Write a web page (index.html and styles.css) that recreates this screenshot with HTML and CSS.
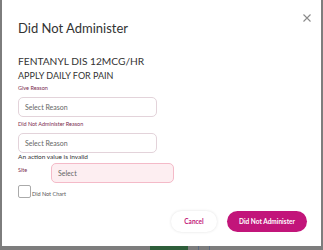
FILE: index.html
```html
<!DOCTYPE html>
<html>
<head>
    <meta charset="UTF-8">
    <meta name="viewport" content="width=device-width, initial-scale=1.0">
    <title>Did Not Administer</title>
    <link rel="stylesheet" href="styles.css">
</head>
<body>
    <div class="overlay">
        <div class="modal">
            <button class="close" aria-label="Close">
                <svg width="8" height="8" viewBox="0 0 8 8"><path d="M0.5 0.5L7.5 7.5M7.5 0.5L0.5 7.5" stroke="#8a8a8a" stroke-width="1.1" fill="none"/></svg>
            </button>
            <h1>Did Not Administer</h1>

            <div class="drug">FENTANYL DIS 12MCG/HR</div>
            <div class="sig">APPLY DAILY FOR PAIN</div>

            <label class="field-label">Give Reason</label>
            <div class="select-box">Select Reason</div>

            <label class="field-label">Did Not Administer Reason</label>
            <div class="select-box">Select Reason</div>

            <div class="error">An action value is invalid</div>
            <div class="site-row">
                <label class="field-label site-label">Site</label>
                <div class="select-box invalid">Select</div>
            </div>

            <div class="chart-row">
                <span class="checkbox"></span>
                <span class="chart-label">Did Not Chart</span>
            </div>

            <div class="actions">
                <button class="btn btn-cancel">Cancel</button>
                <button class="btn btn-primary">Did Not Administer</button>
            </div>
        </div>
        <div class="bottom-strip">
            <span class="strip-green"></span>
            <span class="strip-mark"></span>
            <span class="strip-mark"></span>
        </div>
    </div>
</body>
</html>
```

FILE: styles.css
```css
* {
    box-sizing: border-box;
}
body {
    margin: 0;
    font-family: Lato, 'Open Sans', sans-serif;
    background: #7d7d7d;
    color: #333;
}
.overlay {
    width: 323px;
    height: 250px;
    padding: 0 2px;
    overflow: hidden;
}
.modal {
    position: relative;
    background: #fff;
    height: 246px;
    padding: 21px 14px 0 16px;
}
.close {
    position: absolute;
    top: 10px;
    right: 10px;
    border: none;
    background: none;
    padding: 0;
    cursor: pointer;
}
h1 {
    margin: 0 0 20px;
    font-size: 13px;
    font-weight: 400;
    color: #333;
    line-height: 14px;
}
.drug {
    font-size: 10.2px;
    line-height: 12px;
    color: #333;
}
.sig {
    margin-top: 4px;
    font-size: 9px;
    line-height: 10px;
    color: #333;
}
.field-label {
    display: block;
    margin-top: 4px;
    font-size: 5.5px;
    line-height: 7px;
    color: #7b2d4f;
}
.select-box {
    margin-top: 5px;
    width: 139px;
    height: 20px;
    padding: 0 6px;
    border: 1px solid #e3d3da;
    border-radius: 5px;
    font-size: 7px;
    line-height: 18px;
    color: #666;
    background: #fff;
}
.error {
    margin-top: 0;
    font-size: 6.5px;
    line-height: 8px;
    color: #333;
}
.site-row {
    display: flex;
}
.site-label {
    width: 33px;
    margin-top: 6px;
}
.select-box.invalid {
    margin-top: 2px;
    width: 123px;
    background: #fdeef1;
    border-color: #f4bac8;
}
.chart-row {
    display: flex;
    align-items: flex-end;
    margin-top: 2px;
}
.checkbox {
    width: 13px;
    height: 13px;
    border: 1px solid #aaa;
    border-radius: 2px;
}
.chart-label {
    font-size: 5.5px;
    line-height: 7px;
    color: #555;
    margin-left: 1px;
}
.actions {
    display: flex;
    justify-content: flex-end;
    gap: 10px;
    margin-top: 13px;
}
.btn {
    height: 21px;
    border: none;
    border-radius: 11px;
    font-family: Lato, 'Open Sans', sans-serif;
    font-size: 6.5px;
    font-weight: 700;
    cursor: pointer;
}
.btn-cancel {
    width: 46px;
    background: #fff;
    color: #c2187a;
    box-shadow: 0 0 3px rgba(0,0,0,0.12);
}
.btn-primary {
    width: 80px;
    background: #c2157a;
    color: #fff;
}
.bottom-strip {
    display: flex;
    height: 4px;
    gap: 10px;
    padding-left: 148px;
}
.strip-green {
    width: 38px;
    background: #2e5e3a;
}
.strip-mark {
    width: 1px;
    background: #5b6a80;
}
```
